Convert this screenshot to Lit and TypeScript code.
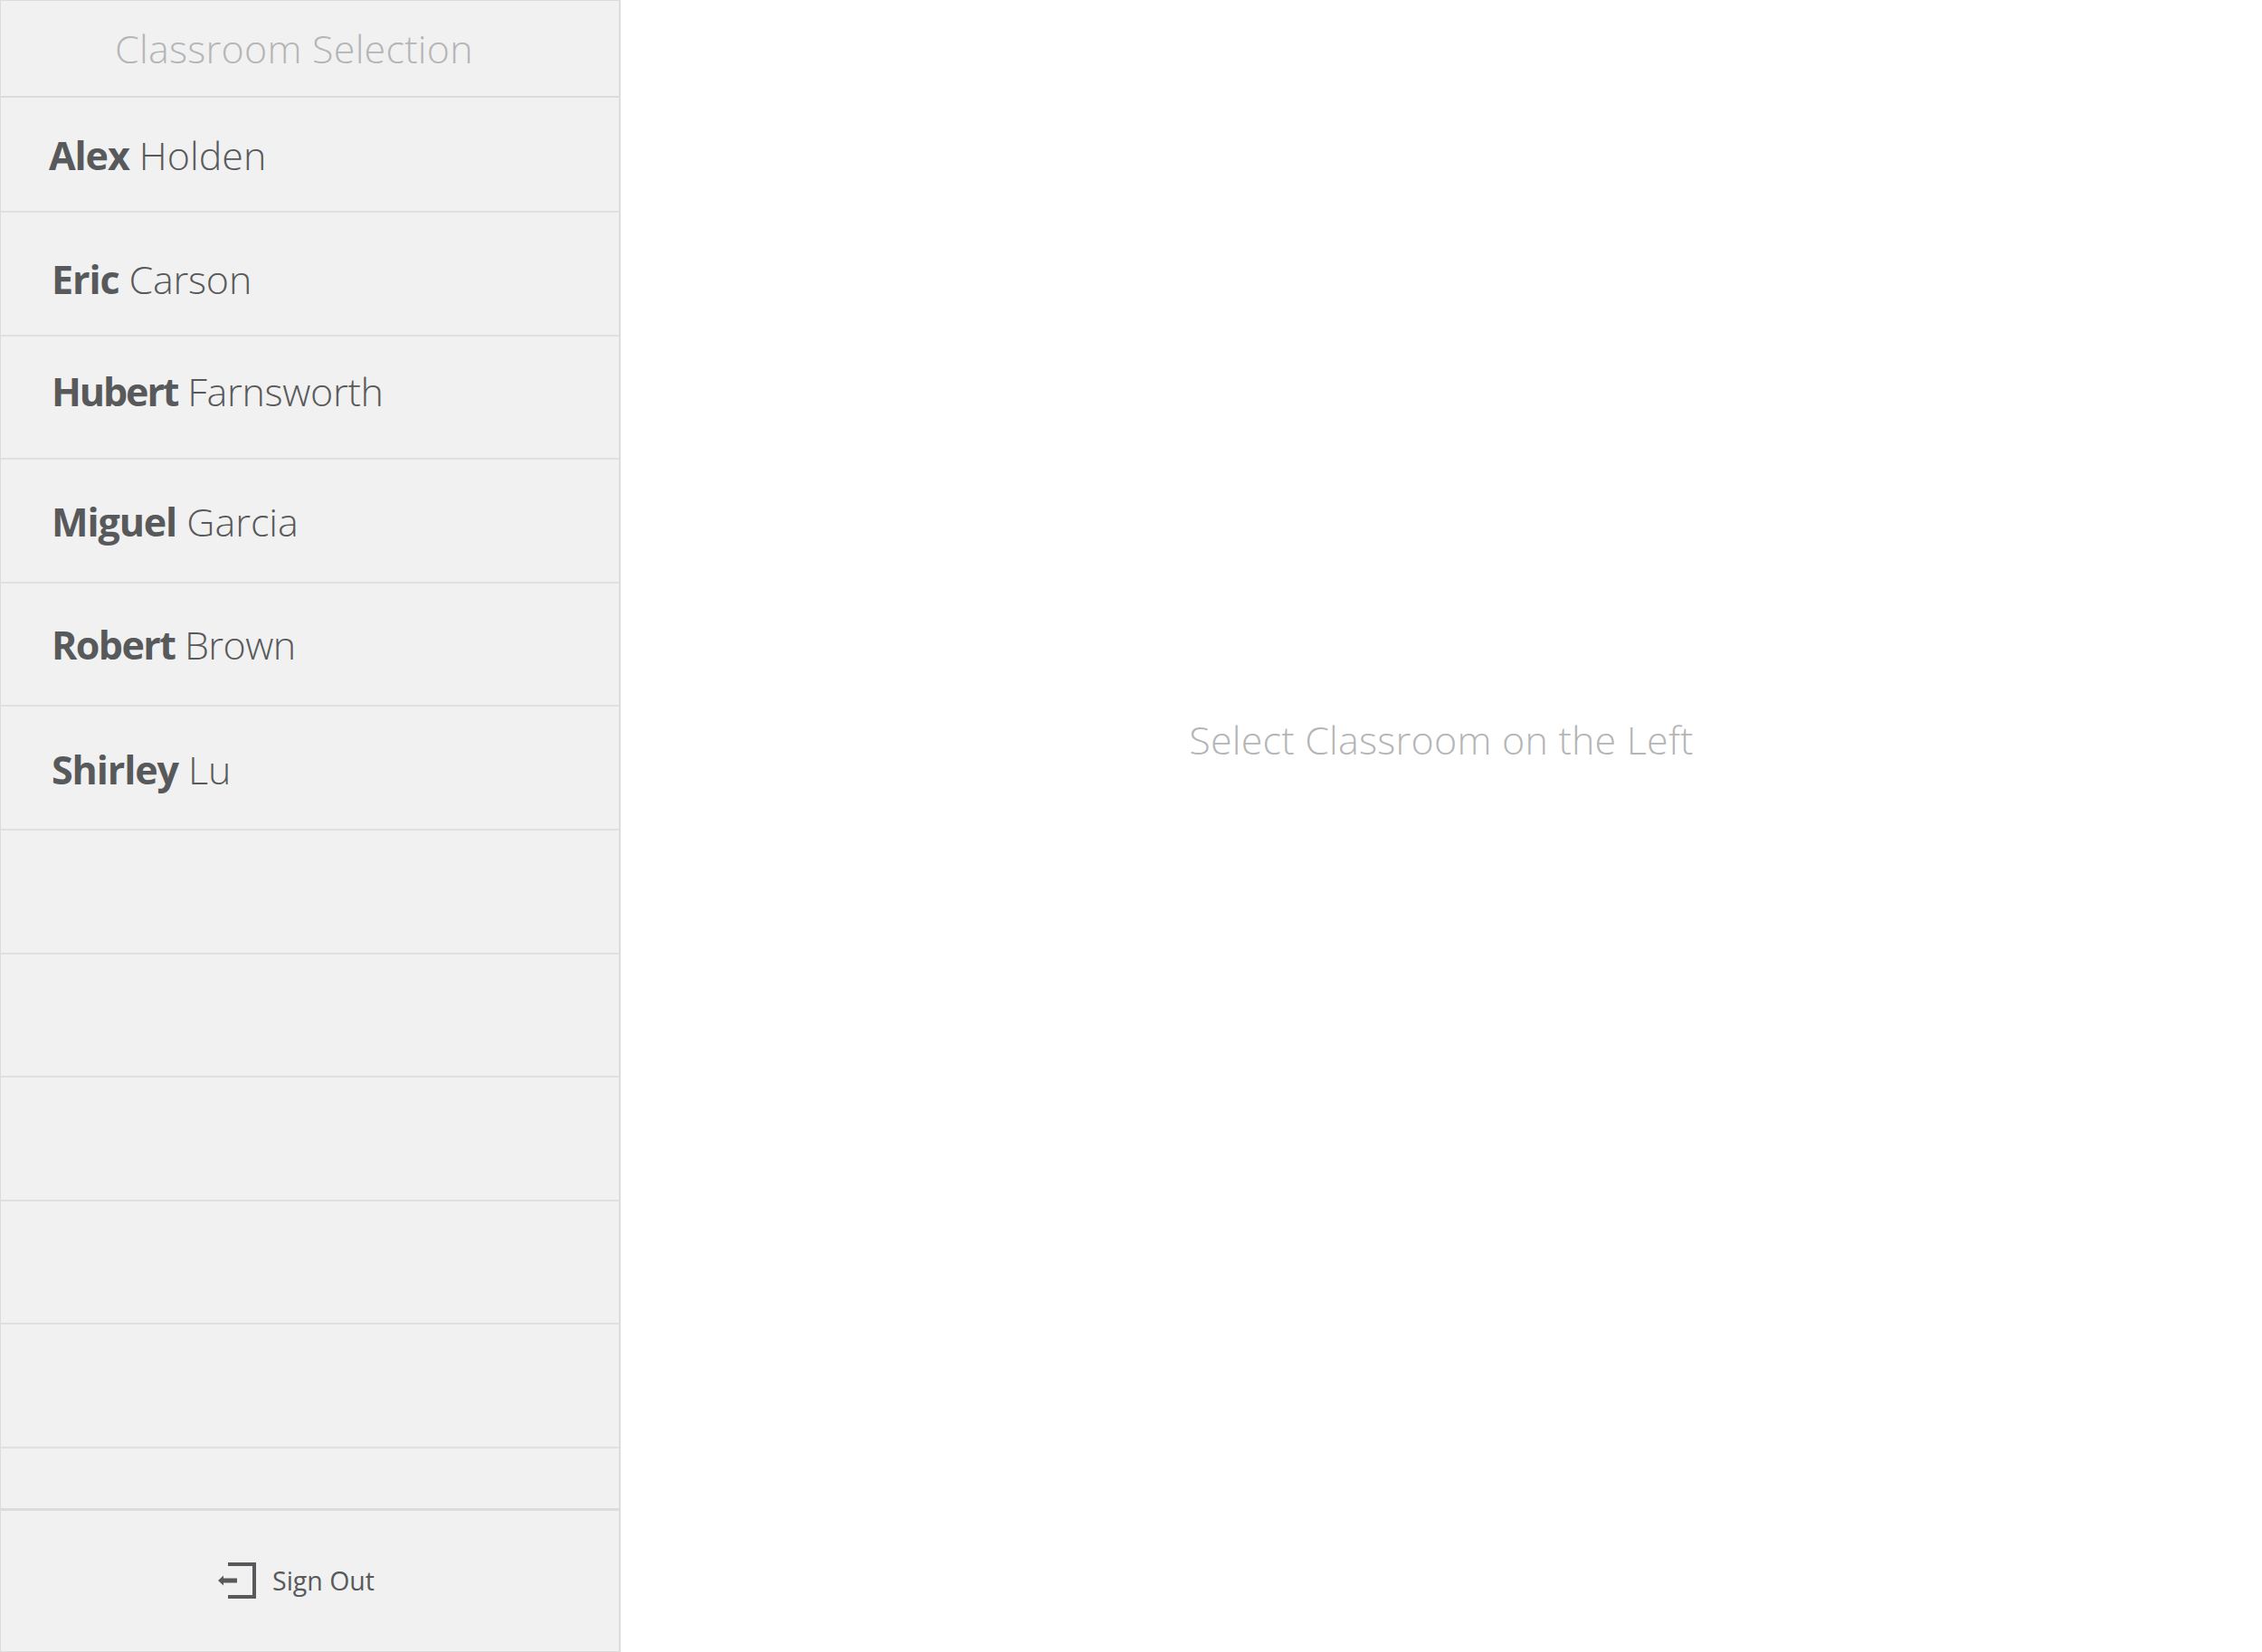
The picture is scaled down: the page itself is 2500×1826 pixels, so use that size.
import { LitElement, html, css } from "lit";
import { customElement } from "lit/decorators.js";

interface Row { first: string; last: string; cls: string; }

const ROWS: Row[] = [
  { first: "Alex", last: "Holden", cls: "r0" },
  { first: "Eric", last: "Carson", cls: "r1" },
  { first: "Hubert", last: "Farnsworth", cls: "r2" },
  { first: "Miguel", last: "Garcia", cls: "r3" },
  { first: "Robert", last: "Brown", cls: "r4" },
  { first: "Shirley", last: "Lu", cls: "r5" },
  { first: "", last: "", cls: "" },
  { first: "", last: "", cls: "" },
  { first: "", last: "", cls: "" },
  { first: "", last: "", cls: "" },
  { first: "", last: "", cls: "" },
  { first: "", last: "", cls: "short" },
];

@customElement("app-root")
export class AppRoot extends LitElement {
  static styles = css`
    :host { display: flex; width: 2500px; height: 1826px; background: #fff; font-family: "Open Sans", sans-serif; overflow: hidden; }
    .side { width: 686px; height: 1826px; box-sizing: border-box; background: #f1f1f1; border: 2px solid #dcdcdc; border-width: 1px 2px 1px 1px; display: flex; flex-direction: column; flex: none; }
    .head { height: 107px; box-sizing: border-box; border-bottom: 2px solid #dcdcdc; padding: 20px 0 0 126px; font-size: 43px; font-weight: 300; line-height: 66px; letter-spacing: 0.25px; color: #b4b5b7; flex: none; }
    .list { flex: 1; display: flex; flex-direction: column; min-height: 0; }
    .row { height: 136.6px; box-sizing: border-box; border-bottom: 2px solid #e0e0e0; flex: none; padding-left: 56px; font-size: 43px; line-height: 60px; color: #58595b; font-weight: 300; white-space: nowrap; }
    .row b { font-weight: 700; letter-spacing: -1.1px; }
    .r0 { height: 127px; padding-top: 34px; padding-left: 53px; }
    .r1 { padding-top: 44px; letter-spacing: -0.2px; }
    .r2 { padding-top: 31.5px; letter-spacing: -0.3px; }
    .r2 b { letter-spacing: -2.1px; }
    .r3 { padding-top: 39px; }
    .r4 { padding-top: 38px; letter-spacing: -0.5px; }
    .r4 b { letter-spacing: -1.6px; }
    .r5 { padding-top: 40px; }
    .short { height: 66px; border: 0; }
    .foot { height: 158px; box-sizing: border-box; border-top: 3px solid #dcdcdc; flex: none; display: flex; align-items: center; justify-content: center; gap: 17px; padding: 0 31px 1px 0; font-size: 28.5px; color: #58595b; }
    .foot svg { width: 44px; height: 42px; display: block; }
    .main { flex: 1; display: flex; justify-content: center; padding-top: 788px; box-sizing: border-box; font-size: 43px; font-weight: 300; line-height: 60px; letter-spacing: 0.22px; color: #b4b5b7; }
  `;

  render() {
    return html`
      <aside class="side">
        <div class="head">Classroom Selection</div>
        <div class="list">
          ${ROWS.map((r) => html`<div class="row ${r.cls}">${r.first ? html`<b>${r.first}</b> ${r.last}` : ""}</div>`)}
        </div>
        <div class="foot">
          <svg viewBox="0 0 44 42"><path d="M12 3H41V39H12" fill="none" stroke="#58595b" stroke-width="4"/><path d="M7 18.5H22V23.5H7V26.5L1 21L7 15.5Z" fill="#58595b"/></svg>
          <span>Sign Out</span>
        </div>
      </aside>
      <main class="main">Select Classroom on the Left</main>
    `;
  }
}
